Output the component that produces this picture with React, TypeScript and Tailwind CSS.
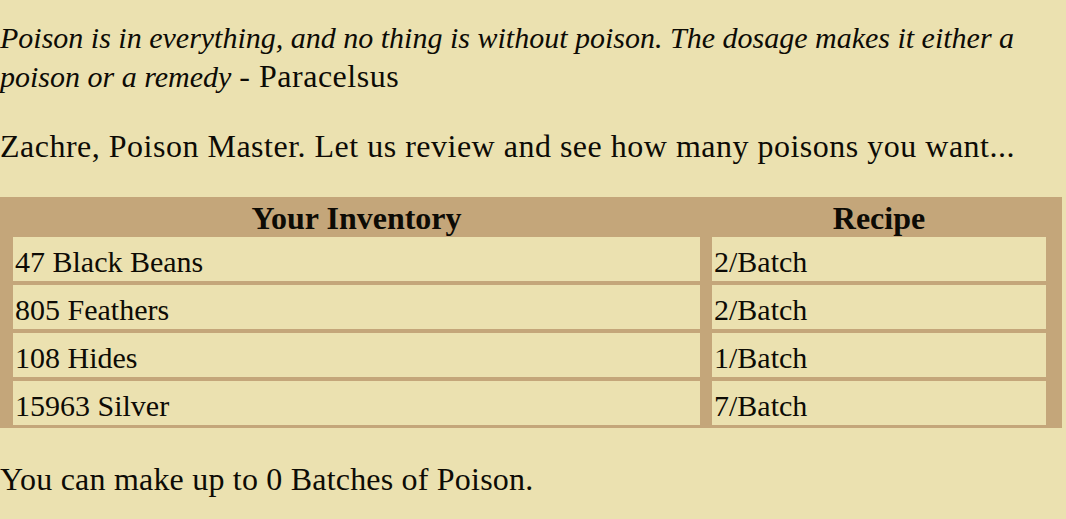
import React from "react";

const rows = [
  ["47 Black Beans", "2/Batch"],
  ["805 Feathers", "2/Batch"],
  ["108 Hides", "1/Batch"],
  ["15963 Silver", "7/Batch"],
];

export default function App() {
  return (
    <div
      className="w-[1066px] h-[519px] overflow-hidden bg-[#ebe1b0] text-[#0d0b05] text-[32px]"
      style={{ fontFamily: '"Liberation Serif", "Times New Roman", serif' }}
    >
      <p className="pt-[18px] leading-[39px]">
        <i className="text-[30px]">
          Poison is in everything, and no thing is without poison. The dosage makes it either a poison or a remedy
        </i>{" "}
        <span className="tracking-[0.5px]">- Paracelsus</span>
      </p>
      <p className="mt-[31px] leading-[39px] tracking-[0.5px] whitespace-nowrap">
        Zachre, Poison Master. Let us review and see how many poisons you want...
      </p>
      <div className="mt-[31px] w-[1062px] bg-[#c4a67a] pl-[13px] pr-[16px] pt-[4px] pb-[3px] grid grid-cols-[687px_334px] gap-x-[12px] gap-y-[4px]">
        <div className="h-[32px] leading-[34px] text-center font-bold">Your Inventory</div>
        <div className="h-[32px] leading-[34px] text-center font-bold">Recipe</div>
        {rows.map(([a, b]) => (
          <React.Fragment key={a}>
            <div className="h-[44px] pt-[5px] leading-[39px] text-[30px] bg-[#ebe1b0] px-[2px]">{a}</div>
            <div className="h-[44px] pt-[5px] leading-[39px] text-[30px] bg-[#ebe1b0] px-[2px]">{b}</div>
          </React.Fragment>
        ))}
      </div>
      <p className="mt-[32px] leading-[39px] tracking-[0.2px]">You can make up to 0 Batches of Poison.</p>
    </div>
  );
}
